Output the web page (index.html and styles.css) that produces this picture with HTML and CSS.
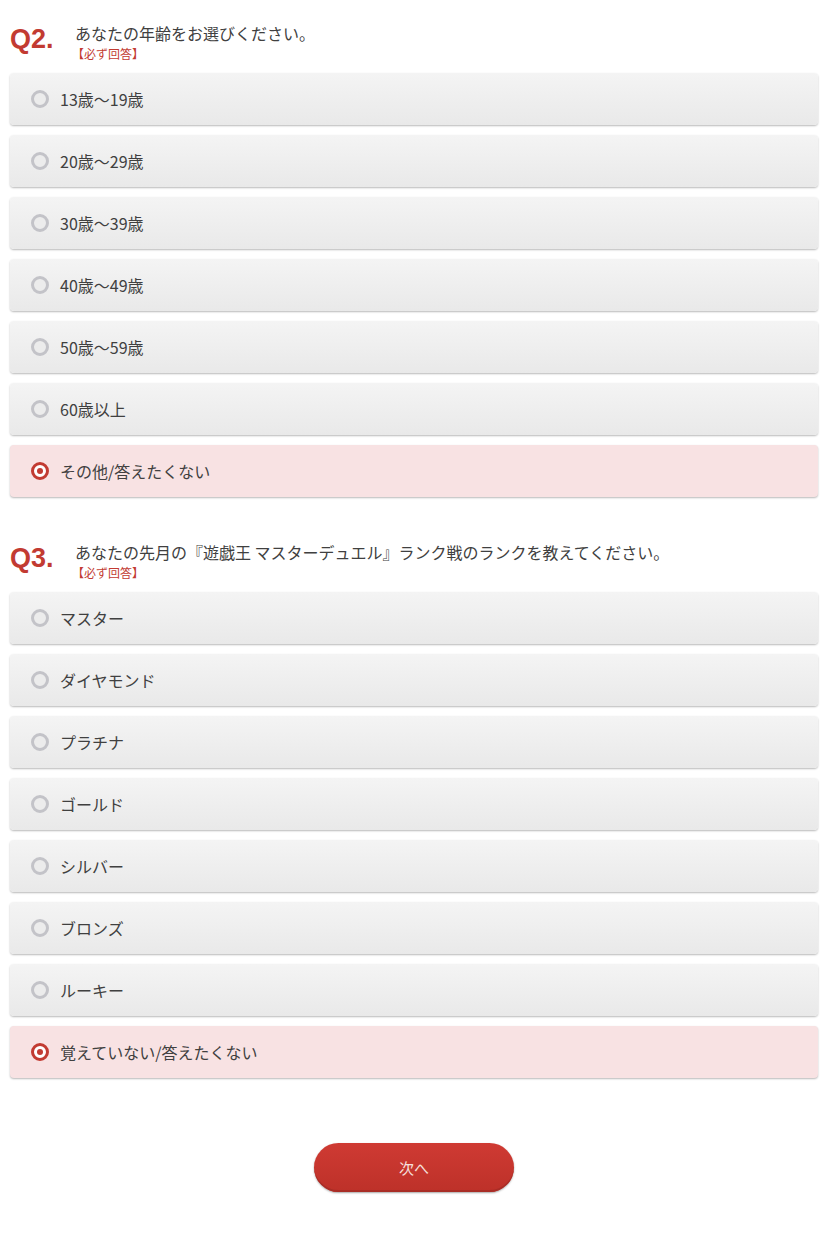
FILE: index.html
```html
<!DOCTYPE html>
<html lang="ja">
<head>
    <meta charset="UTF-8">
    <meta name="viewport" content="width=device-width, initial-scale=1.0">
    <title>アンケート</title>
    <link rel="stylesheet" href="styles.css">
</head>
<body>
    <div class="survey">
        <!-- Q2 -->
        <div class="question">
            <div class="question-head">
                <div class="q-num">Q2.</div>
                <div class="q-body">
                    <div class="q-text">あなたの年齢をお選びください。</div>
                    <div class="q-required">【必ず回答】</div>
                </div>
            </div>
            <ul class="options">
                <li class="option"><span class="radio"></span>13歳〜19歳</li>
                <li class="option"><span class="radio"></span>20歳〜29歳</li>
                <li class="option"><span class="radio"></span>30歳〜39歳</li>
                <li class="option"><span class="radio"></span>40歳〜49歳</li>
                <li class="option"><span class="radio"></span>50歳〜59歳</li>
                <li class="option"><span class="radio"></span>60歳以上</li>
                <li class="option selected"><span class="radio"></span>その他/答えたくない</li>
            </ul>
        </div>

        <!-- Q3 -->
        <div class="question">
            <div class="question-head">
                <div class="q-num">Q3.</div>
                <div class="q-body">
                    <div class="q-text">あなたの先月の『遊戯王 マスターデュエル』ランク戦のランクを教えてください。</div>
                    <div class="q-required">【必ず回答】</div>
                </div>
            </div>
            <ul class="options">
                <li class="option"><span class="radio"></span>マスター</li>
                <li class="option"><span class="radio"></span>ダイヤモンド</li>
                <li class="option"><span class="radio"></span>プラチナ</li>
                <li class="option"><span class="radio"></span>ゴールド</li>
                <li class="option"><span class="radio"></span>シルバー</li>
                <li class="option"><span class="radio"></span>ブロンズ</li>
                <li class="option"><span class="radio"></span>ルーキー</li>
                <li class="option selected"><span class="radio"></span>覚えていない/答えたくない</li>
            </ul>
        </div>

        <div class="actions">
            <button class="btn-next" type="button">次へ</button>
        </div>
    </div>
</body>
</html>
```

FILE: styles.css
```css
:root {
    --red: #c23b32;
    --red-dark: #a92d26;
    --text: #404040;
}

* {
    box-sizing: border-box;
    margin: 0;
    padding: 0;
}

body {
    font-family: "Noto Sans CJK JP", sans-serif;
    background-color: #fff;
    color: var(--text);
}

.survey {
    padding: 22px 16px 40px 10px;
}

.question + .question {
    margin-top: 44px;
}

.question-head {
    display: flex;
    margin-bottom: 10px;
}

.q-num {
    width: 65px;
    flex-shrink: 0;
    font-family: "Liberation Sans", Arial, sans-serif;
    font-size: 27px;
    font-weight: 700;
    line-height: 30px;
    margin-top: 2px;
    color: var(--red);
}

.q-text {
    font-size: 16px;
    line-height: 22px;
    color: var(--text);
}

.q-required {
    font-size: 12px;
    line-height: 18px;
    margin-top: 1px;
    color: var(--red);
    margin-left: -3px;
}

.options {
    list-style: none;
}

.option {
    display: flex;
    align-items: center;
    height: 52px;
    margin-bottom: 10px;
    padding-left: 21px;
    font-size: 16px;
    color: var(--text);
    background: linear-gradient(#f4f4f4, #e9e9e9);
    border-radius: 4px;
    box-shadow: 0 1px 2px rgba(0, 0, 0, 0.28);
}

.option.selected {
    background: #f8e2e3;
}

.radio {
    width: 18px;
    height: 18px;
    border-radius: 50%;
    border: 3.5px solid #c3c3c8;
    background: #ececec;
    margin-right: 11px;
    position: relative;
    flex-shrink: 0;
}

.option.selected .radio {
    border-color: var(--red);
    background: #fff;
}

.option.selected .radio::after {
    content: '';
    position: absolute;
    left: 2.5px;
    top: 2.5px;
    width: 6px;
    height: 6px;
    border-radius: 50%;
    background: var(--red);
}

.actions {
    display: flex;
    justify-content: center;
    margin-top: 65px;
}

.btn-next {
    width: 200px;
    height: 49px;
    border: none;
    border-radius: 25px;
    background: linear-gradient(#cf3a33, #bd3129);
    box-shadow: 0 1px 2px rgba(0, 0, 0, 0.35), inset 0 -2px 0 var(--red-dark);
    color: #f6e0de;
    font-family: "Noto Sans CJK JP", sans-serif;
    font-size: 15px;
}
```
